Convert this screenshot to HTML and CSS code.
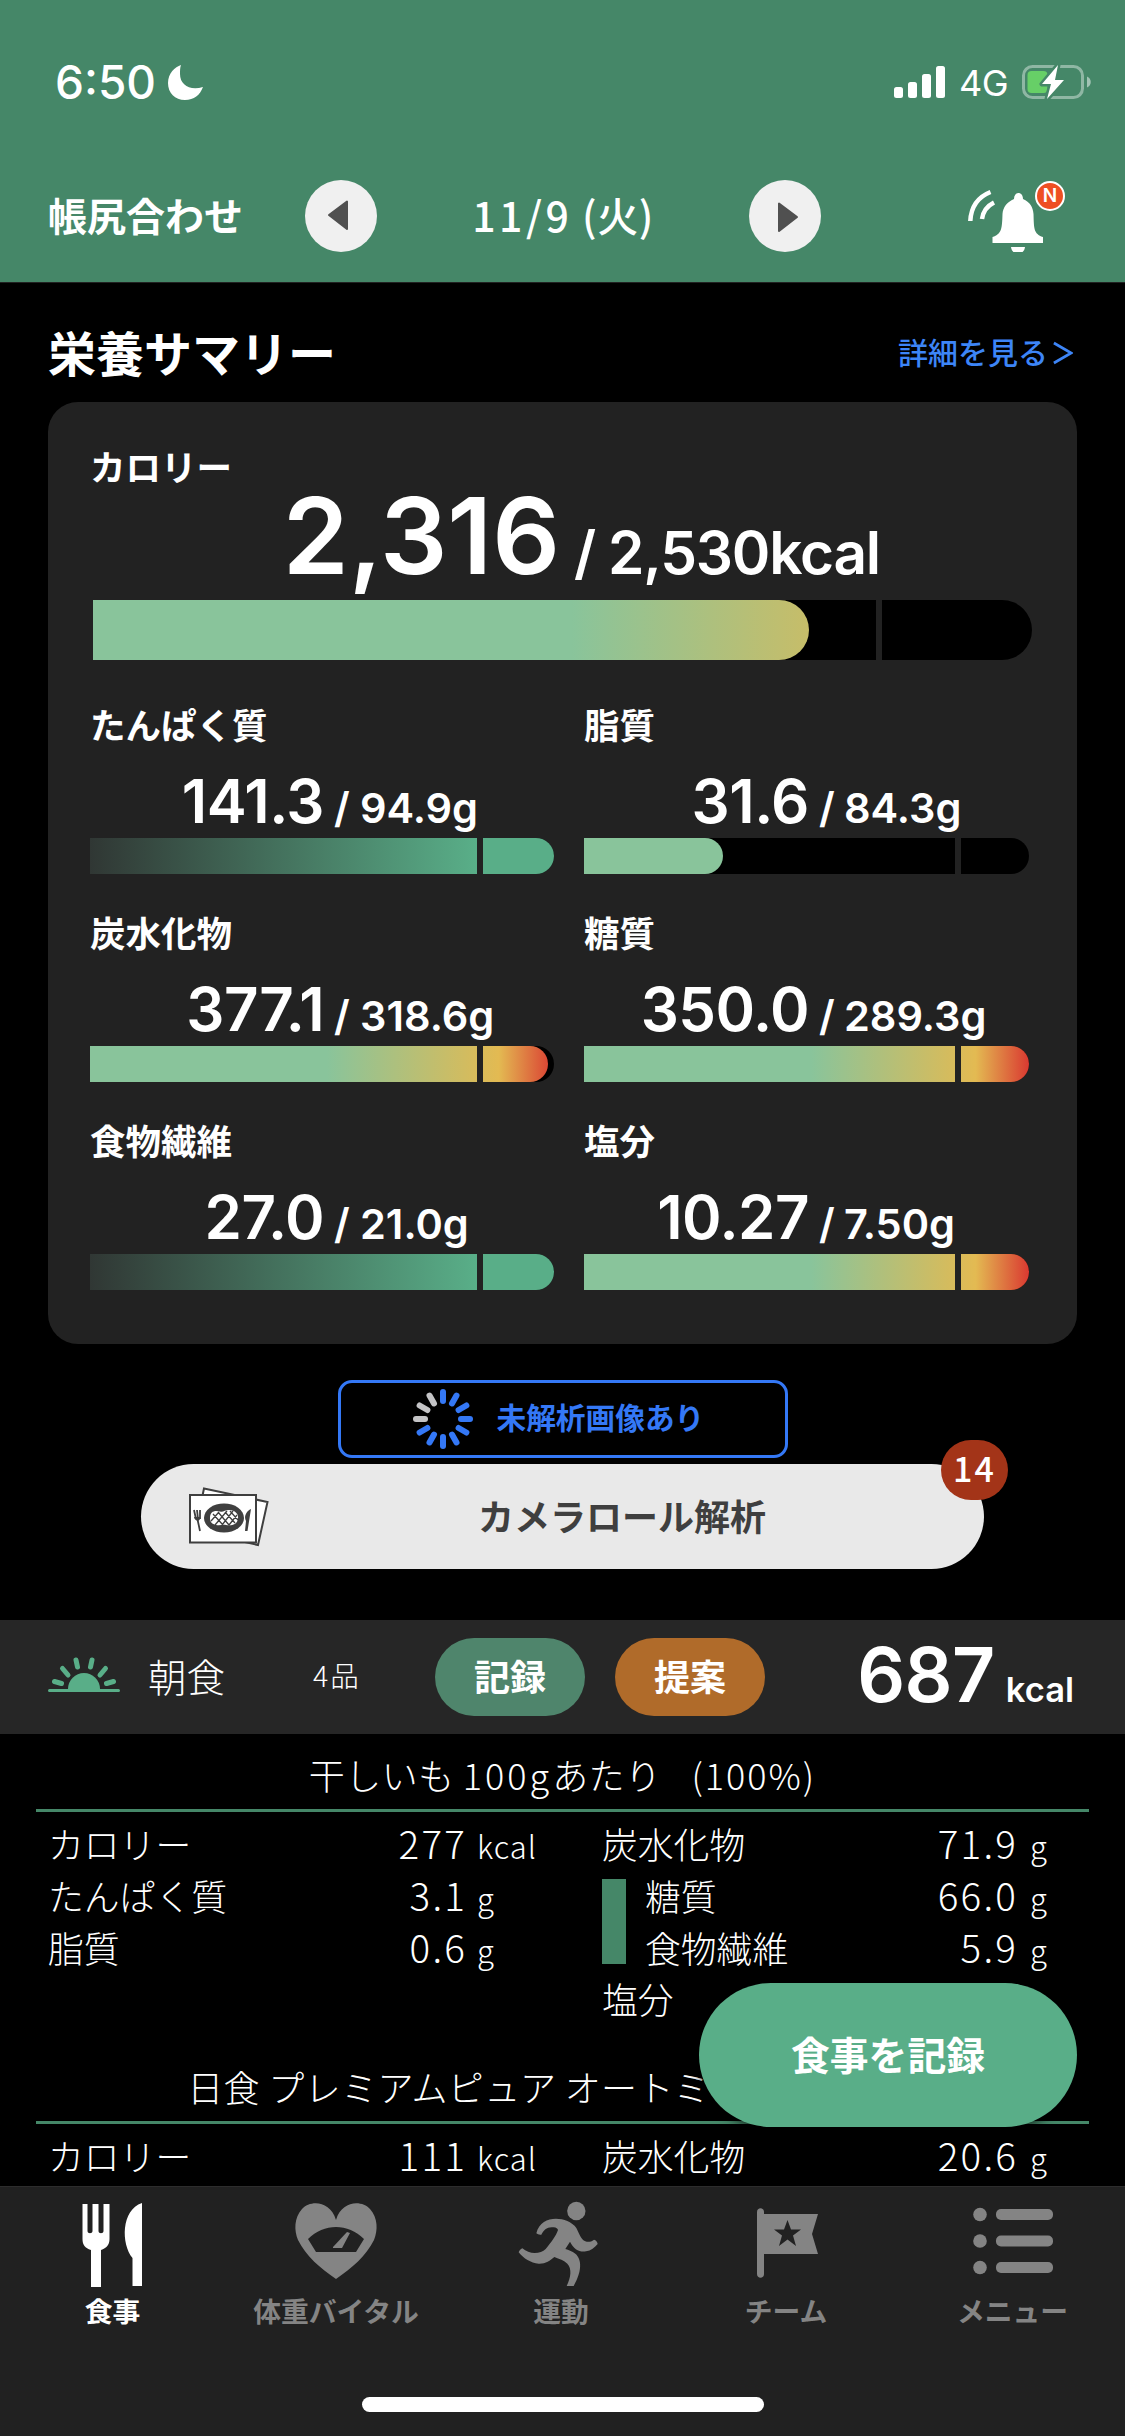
FILE: index.html
```
<!DOCTYPE html>
<html lang="ja">
<head>
<meta charset="utf-8">
<title>栄養サマリー</title>
<link rel="stylesheet" href="styles.css">
</head>
<body>
<header class="header">
  <div class="status">
    <div class="status-left">
      <span class="clock">6:50</span>
      <svg class="moon" viewBox="0 0 35 35"><path d="M13 0C7 2 0 8 0 18c0 10 7 17 17 17 9 0 15-5 18-13-13 4-23-2-23-13 0-4 0-6 1-9z" fill="#fff"/></svg>
    </div>
    <div class="status-right">
      <svg class="signal" viewBox="0 0 51 32"><g fill="#fff"><rect x="0" y="21" width="9" height="11" rx="2.5"/><rect x="14" y="16" width="9" height="16" rx="2.5"/><rect x="28" y="8" width="9" height="24" rx="2.5"/><rect x="42" y="0" width="9" height="32" rx="2.5"/></g></svg>
      <span class="network">4G</span>
      <svg class="battery" viewBox="0 0 70 36"><rect x="1.500" y="2.500" width="59" height="31" rx="9" fill="none" stroke="#fff" stroke-opacity=".4" stroke-width="3"/><path d="M65 12.500c5 2 5 9 0 11z" fill="#fff" fill-opacity=".5"/><rect x="5.500" y="7" width="20" height="22" rx="4" fill="#67cf67"/><path d="M36 1L20 20h9l-4 15 17-19h-9z" fill="#fff" stroke="#458768" stroke-width="5" paint-order="stroke" stroke-linejoin="round"/></svg>
    </div>
  </div>
  <nav class="nav">
    <span class="nav-adjust">帳尻合わせ</span>
    <button class="circle"><svg viewBox="0 0 72 72"><path d="M24 35L42 21.500V49z" fill="#505050" stroke="#505050" stroke-width="2" stroke-linejoin="round"/></svg></button>
    <span class="nav-date"><span class="wide">11/9</span> (火)</span>
    <button class="circle"><svg viewBox="0 0 72 72"><path d="M48 37L30 23.500V51z" fill="#505050" stroke="#505050" stroke-width="2" stroke-linejoin="round"/></svg></button>
    <div class="bell">
      <svg viewBox="0 0 98 72"><g fill="none" stroke="#fff" stroke-width="4.500"><path d="M2.300 41C3 27 10 17 22.500 12"/><path d="M14 39C15 32 19 26 26 22.500"/></g><path d="M46 19c0-8 9-8 9 0 7 3 10 8 10.500 15 .5 14 0 20 9.500 23v6H24.500v-6C34 54 34 48 34.500 34 35 27 39 22 46 19z" fill="#fff"/><path d="M43 67h14c-1 9-13 9-14 0z" fill="#fff"/></svg>
      <span class="bell-badge">N</span>
    </div>
  </nav>
</header>

<section class="summary-head">
  <h1>栄養サマリー</h1>
  <a class="detail">詳細を見る<svg viewBox="0 0 22 24"><path d="M1 1l19 11L1 23" fill="none" stroke="#3d85f7" stroke-width="3"/></svg></a>
</section>

<section class="card">
  <div class="metric calories">
    <h2>カロリー</h2>
    <div class="amount"><b>2,316</b><span class="slash">/</span><span class="goal">2,530kcal</span></div>
    <div class="bar"><div class="fill heat round" style="--p:76.3"></div></div>
  </div>
  <div class="metrics">
    <div class="metric"><h2>たんぱく質</h2><div class="amount"><b>141.3</b><span class="slash">/</span><span class="goal">94.9g</span></div><div class="bar"><div class="fill good" style="--p:100"></div></div></div>
    <div class="metric"><h2>脂質</h2><div class="amount"><b>31.6</b><span class="slash">/</span><span class="goal">84.3g</span></div><div class="bar"><div class="fill heat round" style="--p:31.2"></div></div></div>
    <div class="metric"><h2>炭水化物</h2><div class="amount"><b>377.1</b><span class="slash">/</span><span class="goal">318.6g</span></div><div class="bar"><div class="fill heat round" style="--p:98.6"></div></div></div>
    <div class="metric"><h2>糖質</h2><div class="amount"><b>350.0</b><span class="slash">/</span><span class="goal">289.3g</span></div><div class="bar"><div class="fill heat" style="--p:100"></div></div></div>
    <div class="metric"><h2>食物繊維</h2><div class="amount"><b>27.0</b><span class="slash">/</span><span class="goal">21.0g</span></div><div class="bar"><div class="fill good" style="--p:100"></div></div></div>
    <div class="metric"><h2>塩分</h2><div class="amount"><b>10.27</b><span class="slash">/</span><span class="goal">7.50g</span></div><div class="bar"><div class="fill heat" style="--p:100"></div></div></div>
  </div>
</section>

<section class="analysis">
  <div class="pending">
    <svg viewBox="-30 -30 60 60"><g stroke="#3478f6" stroke-width="6" stroke-linecap="round"><path d="M0-18V-27"/><path d="M0-18V-27" transform="rotate(30)"/><path d="M0-18V-27" transform="rotate(60)"/><path d="M0-18V-27" transform="rotate(90)"/><path d="M0-18V-27" transform="rotate(120)"/><path d="M0-18V-27" transform="rotate(150)"/><path d="M0-18V-27" transform="rotate(180)"/><path d="M0-18V-27" transform="rotate(210)"/><path d="M0-18V-27" transform="rotate(240)"/></g><g stroke="#c4c4c6" stroke-width="6" stroke-linecap="round"><path d="M0-18V-27" transform="rotate(270)"/><path d="M0-18V-27" transform="rotate(300)"/><path d="M0-18V-27" transform="rotate(330)"/></g></svg>
    <span>未解析画像あり</span>
  </div>
  <div class="camera">
    <svg viewBox="0 0 80 60"><g fill="#fff" stroke="#3f3f3f" stroke-width="2"><path d="M15 1.500L78.500 15 69 58 6 44z"/><rect x="1" y="8" width="66" height="47.500"/></g><ellipse cx="35" cy="31" rx="20" ry="14.500" fill="#3f3f3f"/><path d="M21 31c0-7 5-8 10-6.500 3 1 5-1.500 9-1.500 6 0 10 4 9 9-1 6-7 7-12 6-4-.6-6 1-10 0-4-1-6-3-6-7z" fill="#fff"/><path d="M24 27l10 11M29 25l11 13M36 25l10 11M41 24l8 9M22 34l8-9M26 38l12-14M33 38l11-14M40 38l8-10" stroke="#3f3f3f" stroke-width="1.300"/><path d="M5 23l2 9M8 23l1 9M11 23v9M8 30l3 14" stroke="#3f3f3f" stroke-width="1.800" fill="none"/><path d="M5 30c1 5 7 5 6 0z" fill="#3f3f3f"/><path d="M62 22c-6 3-7 9-5 12l-1 10h2.500z" fill="#3f3f3f"/></svg>
    <span>カメラロール解析</span>
    <span class="count">14</span>
  </div>
</section>

<section class="meal">
  <svg class="sun" viewBox="0 0 72 36"><path d="M20 33a16 16 0 0 1 32 0z" fill="#59ae88"/><g stroke="#59ae88" stroke-linecap="round"><path d="M1.500 34.500h69" stroke-width="3"/><path d="M6.500 25.500l7 2M14.500 12.500l5.500 6.500M28 4l1.500 7M44 4l-1.500 7M57.500 12.500L52 19M65.500 25.500l-7 2" stroke-width="5"/></g></svg>
  <span class="meal-name">朝食</span>
  <span class="meal-count">4品</span>
  <button class="pill record">記録</button>
  <button class="pill suggest">提案</button>
  <div class="meal-kcal"><b>687</b><span>kcal</span></div>
</section>

<main class="items">
  <article class="item">
    <h3>干しいも <span class="wide">100g</span>あたり<span class="ratio">(100%)</span></h3>
    <div class="facts">
      <div class="col left">
        <div class="row"><span>カロリー</span><b>277</b><i>kcal</i></div>
        <div class="row"><span>たんぱく質</span><b>3.1</b><i>g</i></div>
        <div class="row"><span>脂質</span><b>0.6</b><i>g</i></div>
      </div>
      <div class="col right">
        <div class="row"><span>炭水化物</span><b>71.9</b><i>g</i></div>
        <div class="group">
          <div class="row"><span>糖質</span><b>66.0</b><i>g</i></div>
          <div class="row"><span>食物繊維</span><b>5.9</b><i>g</i></div>
        </div>
        <div class="row"><span>塩分</span><b></b><i>g</i></div>
      </div>
    </div>
  </article>
  <article class="item">
    <h3>日食 プレミアムピュア オートミール<span class="ratio">(100%)</span></h3>
    <div class="facts">
      <div class="col left">
        <div class="row"><span>カロリー</span><b>111</b><i>kcal</i></div>
      </div>
      <div class="col right">
        <div class="row"><span>炭水化物</span><b>20.6</b><i>g</i></div>
      </div>
    </div>
  </article>
</main>
<button class="fab">食事を記録</button>

<footer class="tabbar">
  <div class="tabs">
    <div class="tab active"><svg viewBox="0 0 100 100"><path d="M19.500 10h5v27c0 3 5 3 5 0V10h6v27c0 3 5 3 5 0V10h6v35c0 6-3 9-8.500 11v37h-10V56c-6-2-8.500-5-8.500-11z"/><path d="M79 9v83h-9.500V64C58 50 58 16 79 9z"/></svg><span>食事</span></div>
    <div class="tab vital"><svg viewBox="0 0 100 100"><path fill-rule="evenodd" d="M50 26C56 6 76 6 84 15c8 9 8 21 4 31C80 62 66 74 50 85 34 74 20 62 12 46c-4-10-4-22 4-31C24 6 44 6 50 26zM22 45l8 13h40l8-13C62 29 38 29 22 45z"/><path d="M47 53l14-15 3 1-8 15h-9z"/></svg><span>体重バイタル</span></div>
    <div class="tab run"><svg viewBox="0 0 300 300"><circle cx="202" cy="51" r="27.500"/><path d="M97 122c7-15 19-25 37-22 8 1 12 4 13 8-6 18-22 39-37 57-15 15-48 18-70-2-6 2-9 7-11 12 15 19 36 32 60 34 20 1 34-9 47-20 15 6 29 10 39 20 14 15 11 40-2 67h21c27-47 28-91-9-105-6-3-11-5-16-6l14-22c11 23 28 32 48 29 15-2 26-11 35-22-1-6-5-12-11-13-9 7-18 8-26 5-13-5-19-25-27-40-6-9-17-16-27-21-33-13-81-10-93 37 4 3 8 5 15 4z"/></svg><span>運動</span></div>
    <div class="tab team"><svg viewBox="0 0 100 100"><path fill-rule="evenodd" d="M28 20h54l-6 20 6 20H28v20c0 5-7 5-7 0V18c0-5 7-5 7 0zM51.500 26l-3.500 9.500H38l8 6-3 10.500 8.500-6.500L60 52l-3-10.500 8-6H55z"/></svg><span>チーム</span></div>
    <div class="tab"><svg viewBox="0 0 100 100"><circle cx="17" cy="20.500" r="6.800"/><circle cx="17" cy="47" r="6.800"/><circle cx="17" cy="73.500" r="6.800"/><rect x="33" y="15" width="57" height="11" rx="5"/><rect x="33" y="41.500" width="57" height="11" rx="5"/><rect x="33" y="68" width="57" height="11" rx="5"/></svg><span>メニュー</span></div>
  </div>
  <div class="home-bar"></div>
</footer>
</body>
</html>
```
FILE: styles.css
```
* { box-sizing: border-box; }

body {
  margin: 0;
  position: relative;
  width: 1125px;
  height: 2436px;
  display: flex;
  flex-direction: column;
  overflow: hidden;
  background: #000;
  color: #fff;
  font-family: "Noto Sans CJK JP", sans-serif;
  white-space: nowrap;
}

h1, h2, h3 { margin: 0; }
button { border: 0; padding: 0; margin: 0; color: inherit; font-family: inherit; }
svg { display: block; flex: none; }
.wide { letter-spacing: 3px; }

/* Header */
.header {
  flex: none;
  height: 283px;
  background: #458768;
  border-bottom: 1px solid #222;
}
.status {
  height: 164px;
  display: flex;
  justify-content: space-between;
  align-items: center;
  padding: 0 33px 0 55px;
  font-family: Inter, sans-serif;
}
.status-left, .status-right { display: flex; align-items: center; }
.clock { width: 113px; font-size: 46px; font-weight: 500; line-height: 56px; }
.moon { width: 35px; height: 35px; }
.signal { width: 51px; height: 32px; }
.network { width: 62px; margin-left: 14px; font-size: 36px; line-height: 44px; padding-top: 2px; letter-spacing: -.5px; }
.battery { width: 70px; height: 36px; margin-left: 1px; }
.nav {
  height: 104px;
  display: grid;
  grid-template-columns: 305px 72px 372px 72px 1fr;
  align-items: center;
}
.nav-adjust { padding-left: 48px; font-size: 39px; line-height: 56px; font-weight: 700; padding-bottom: 4px; }
.circle { width: 72px; height: 72px; border-radius: 50%; background: #f0f0f0; }
.nav-date { text-align: center; font-size: 41px; line-height: 56px; font-weight: 500; padding-bottom: 4px; letter-spacing: .5px; }
.nav-date .wide { letter-spacing: 3.500px; }
.bell { position: relative; margin-left: 147px; width: 98px; height: 72px; }
.bell svg { width: 98px; height: 72px; }
.bell-badge {
  position: absolute;
  right: 1px;
  top: 1px;
  width: 30px;
  height: 30px;
  border: 2px solid #fff;
  border-radius: 50%;
  background: #ee4f23;
  font: 600 19px/26px Inter, sans-serif;
  text-align: center;
}

/* Summary */
.summary-head {
  flex: none;
  height: 119px;
  padding: 17px 52px 0 48px;
  display: flex;
  justify-content: space-between;
  align-items: center;
}
.summary-head h1 { font-size: 48px; line-height: 60px; font-weight: 700; }
.detail { display: flex; align-items: center; color: #3d85f7; font-size: 30px; line-height: 40px; font-weight: 500; }
.detail svg { width: 20px; height: 24px; margin: 3px 0 0 5px; }
.card {
  flex: none;
  height: 942px;
  margin: 0 48px;
  padding: 48px 45px 0 42px;
  border-radius: 30px;
  background: #222;
}
.metric h2 { font-size: 35.500px; line-height: 36px; font-weight: 700; position: relative; top: -2px; }
.amount {
  display: grid;
  align-items: baseline;
  height: 94px;
  padding-top: 20px;
  font-family: Inter, sans-serif;
  font-weight: 600;
  font-size: 41.500px;
}
.amount b { text-align: right; font-size: 60px; line-height: 75px; font-weight: 600; letter-spacing: -.5px; }
.metrics .amount { grid-template-columns: 234px 36px 1fr; }
.metrics .slash { padding-left: 10px; }
.metrics .metric:nth-child(even) .amount { grid-template-columns: 225px 35px 1fr; }
.calories { margin-left: 3px; }
.calories h2 { margin-left: -3px; }
.calories .amount { height: 114px; padding-top: 0; grid-template-columns: 467px 48px 1fr; font-size: 58.500px; }
.calories .amount b { font-size: 106px; line-height: 99px; letter-spacing: 0; }
.calories .slash { padding-left: 14px; }
.calories .goal { letter-spacing: -1.200px; }
.metrics {
  margin-top: 48px;
  display: grid;
  grid-template-columns: 464px 445px;
  gap: 42px 30px;
}

/* Progress bars: the goal mark sits at five sixths of the track */
.bar {
  position: relative;
  height: 36px;
  overflow: hidden;
  border-radius: 0 18px 18px 0;
  background: #000;
}
.bar::after {
  content: "";
  position: absolute;
  left: 83.400%;
  top: 0;
  width: 6px;
  height: 100%;
  background: #222;
}
.calories .bar { height: 60px; border-radius: 0 30px 30px 0; }
.fill {
  height: 100%;
  width: calc(var(--p) * 1%);
  background-repeat: no-repeat;
  background-size: calc(10000% / var(--p)) 100%;
}
.fill.round { border-radius: 0 30px 30px 0; }
.fill.heat { background-image: linear-gradient(90deg, #89c49b 51%, #e3ba52 88%, #da3931 100%); }
.fill.good { background-image: linear-gradient(90deg, #303734 0%, #59ae88 83%); }

/* Image analysis */
.analysis {
  flex: none;
  height: 276px;
  padding-top: 36px;
  display: flex;
  flex-direction: column;
  align-items: center;
  gap: 6px;
}
.pending {
  width: 450px;
  height: 78px;
  border: 3px solid #3478f6;
  border-radius: 14px;
  display: flex;
  align-items: center;
  padding-left: 72px;
  color: #3478f6;
  font-size: 29.700px;
  line-height: 40px;
  font-weight: 700;
}
.pending svg { width: 60px; height: 60px; margin-right: 24px; }
.pending span { padding-bottom: 5px; }
.camera {
  position: relative;
  width: 843px;
  height: 105px;
  border-radius: 53px;
  background: #e9e9e9;
  color: #3f3f3f;
  display: flex;
  align-items: center;
  padding-left: 48px;
  font-size: 36px;
  line-height: 50px;
  font-weight: 700;
}
.camera svg { width: 80px; height: 60px; margin-right: 209px; }
.camera span:nth-child(2) { padding-bottom: 3px; }
.camera .count {
  position: absolute;
  right: -24px;
  top: -24px;
  width: 67px;
  height: 60px;
  border-radius: 30px;
  background: #a33418;
  color: #fff;
  font-size: 34px;
  line-height: 56px;
  font-weight: 500;
  letter-spacing: 2px;
  text-align: center;
}

/* Meal header */
.meal {
  flex: none;
  height: 114px;
  display: flex;
  align-items: center;
  background: #262626;
  padding: 0 51px 4px 48px;
}
.sun { width: 72px; height: 36px; margin-top: -2px; }
.meal-name { width: 165px; margin-left: 28px; font-size: 38.500px; font-weight: 300; }
.meal-count { width: 122px; font-size: 28.500px; font-weight: 300; letter-spacing: 2px; margin-top: -2px; }
.pill { width: 150px; height: 78px; border-radius: 39px; font-size: 36px; line-height: 74px; font-weight: 700; margin-top: 4px; padding-bottom: 4px; }
.record { background: #4f856c; margin-right: 30px; }
.suggest { background: #b06b2a; }
.meal-kcal { margin-left: auto; display: flex; align-items: baseline; font-family: Inter, sans-serif; font-size: 34.500px; font-weight: 600; line-height: 80px; margin-top: 15px; }
.meal-kcal b { font-size: 75px; font-weight: 600; margin-right: 11px; letter-spacing: -.5px; }

/* Food items */
.items { flex: 1; min-height: 0; overflow: hidden; font-weight: 300; }
.item { padding-bottom: 20px; }
.item h3 {
  height: 78px;
  margin: 0 36px;
  padding-top: 3px;
  border-bottom: 3px solid #458768;
  text-align: center;
  font-size: 36px;
  line-height: 74px;
  font-weight: 300;
  letter-spacing: .4px;
}
.ratio { margin-left: 30px; letter-spacing: 2px; }
.facts { display: flex; padding: 6px 0 0 48px; }
.col { height: 208px; font-size: 35.800px; line-height: 48px; }
.item:last-child .col { height: 52px; }
.left { width: 554px; }
.right { width: 446px; }
.row { display: grid; height: 52px; align-items: baseline; }
.left .row { grid-template-columns: 240px 179px 1fr; }
.right .row { grid-template-columns: 1fr 180px 30px; }
.row b { text-align: right; font-weight: 300; font-size: 38.500px; letter-spacing: 2.200px; }
.row i { font-style: normal; font-size: 31px; padding-left: 10px; letter-spacing: 1px; }
.right .row i { padding-left: 12px; }
.group { display: flow-root; border-left: 24px solid #458768; padding-left: 19px; margin: 9px 0 10px; height: 85px; }
.group .row:first-child { margin-top: -9px; }

.fab {
  position: absolute;
  left: 699px;
  top: 1983px;
  width: 378px;
  height: 144px;
  border-radius: 72px;
  background: #59ae88;
  box-shadow: 0 0 12px #000;
  font-size: 38.800px;
  font-weight: 700;
  padding-bottom: 4px;
}

/* Tab bar */
.tabbar { flex: none; height: 250px; background: #212121; border-top: 1px solid #2d2d2d; }
.tabs { display: grid; grid-template-columns: repeat(5, 1fr); height: 210px; }
.tab { display: flex; flex-direction: column; align-items: center; padding-top: 7px; color: #848484; fill: #848484; font-size: 27.800px; font-weight: 700; line-height: 40px; }
.tab svg { width: 100px; height: 100px; margin-bottom: -4px; }
.tab.active { color: #fff; fill: #fff; }
.vital, .run, .team { padding-right: 3px; }
.run svg { margin-right: 4px; }
.home-bar { width: 402px; height: 15px; margin: 0 auto; border-radius: 8px; background: #fff; }
```
